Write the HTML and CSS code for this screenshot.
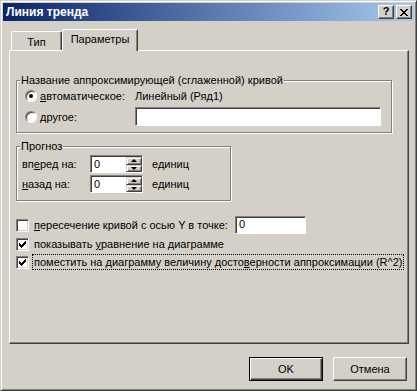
FILE: index.html
```html
<!DOCTYPE html>
<html lang="ru">
<head>
  <meta charset="UTF-8">
  <title>Линия тренда</title>
  <link rel="stylesheet" href="styles.css">
</head>
<body>
  <div class="window">
    <!-- Title bar -->
    <div class="titlebar">
      <span class="title">Линия тренда</span>
      <div class="caption-buttons">
        <div class="cap help">?</div>
        <div class="cap close">
          <svg width="8" height="7" viewBox="0 0 8 7" shape-rendering="crispEdges">
            <path d="M0 0h2v1h-2zM6 0h2v1h-2zM1 1h2v1h-2zM5 1h2v1h-2zM2 2h4v1h-4zM3 3h2v1h-2zM2 4h4v1h-4zM1 5h2v1h-2zM5 5h2v1h-2zM0 6h2v1h-2zM6 6h2v1h-2z" fill="#000"/>
          </svg>
        </div>
      </div>
    </div>

    <div class="client">
      <!-- Tabs -->
      <div class="tabs">
        <div class="tab">Тип</div>
        <div class="tab active">Параметры</div>
      </div>

      <div class="panel">
        <fieldset class="group group-name">
          <legend>Название аппроксимирующей (сглаженной) кривой</legend>
          <div class="opt-row first">
            <span class="radio checked"></span>
            <span class="opt-label"><u>а</u>втоматическое:</span>
            <span class="opt-value">Линейный (Ряд1)</span>
          </div>
          <div class="opt-row">
            <span class="radio"></span>
            <span class="opt-label"><u>д</u>ругое:</span>
            <div class="edit name-edit"></div>
          </div>
        </fieldset>

        <fieldset class="group group-forecast">
          <legend>Прогноз</legend>
          <div class="spin-row">
            <span class="spin-label">вп<u>е</u>ред на:</span>
            <div class="spin">
              <span class="spin-val">0</span>
              <div class="spin-btns">
                <div class="spin-btn"><span class="arr up"></span></div>
                <div class="spin-btn"><span class="arr down"></span></div>
              </div>
            </div>
            <span class="units">единиц</span>
          </div>
          <div class="spin-row">
            <span class="spin-label"><u>н</u>азад на:</span>
            <div class="spin">
              <span class="spin-val">0</span>
              <div class="spin-btns">
                <div class="spin-btn"><span class="arr up"></span></div>
                <div class="spin-btn"><span class="arr down"></span></div>
              </div>
            </div>
            <span class="units">единиц</span>
          </div>
        </fieldset>

        <div class="check-row first">
          <span class="check"></span>
          <span class="check-label"><u>п</u>ересечение кривой с осью Y в точке:</span>
          <div class="edit small-edit">0</div>
        </div>
        <div class="check-row">
          <span class="check checked">
            <svg width="7" height="7" viewBox="0 0 7 7" shape-rendering="crispEdges"><path d="M6 0h1v3h-1v1h-1v1h-1v1h-1v1h-1v-1h-1v-1h-1v-3h1v1h1v1h1v-1h1v-1h1z" fill="#000"/></svg>
          </span>
          <span class="check-label">показывать <u>у</u>равнение на диаграмме</span>
        </div>
        <div class="check-row">
          <span class="check checked">
            <svg width="7" height="7" viewBox="0 0 7 7" shape-rendering="crispEdges"><path d="M6 0h1v3h-1v1h-1v1h-1v1h-1v1h-1v-1h-1v-1h-1v-3h1v1h1v1h1v-1h1v-1h1z" fill="#000"/></svg>
          </span>
          <span class="check-label focused">поместить на диаграмму величину досто<u>в</u>ерности аппроксимации (R^2)</span>
        </div>
      </div>

      <!-- Dialog buttons -->
      <div class="buttons">
        <div class="btn default">OK</div>
        <div class="btn">Отмена</div>
      </div>
    </div>
  </div>
</body>
</html>
```

FILE: styles.css
```css
/* Classic dialog */
body {
  margin: 0;
  background: #d4d0c8;
  font-family: "Liberation Sans", Arial, sans-serif;
  font-size: 11px;
  color: #000;
}
u {
  text-decoration: underline;
  text-underline-offset: 1px;
}
.window {
  width: 417px;
  height: 391px;
  box-sizing: border-box;
  background: #d4d0c8;
  border: 1px solid;
  border-color: #d4d0c8 #404040 #404040 #d4d0c8;
  box-shadow: inset 1px 1px 0 #fff, inset -1px -1px 0 #808080;
  padding: 2px;
  display: flex;
  flex-direction: column;
}
/* Title bar */
.titlebar {
  height: 18px;
  background: linear-gradient(to right, #0a246a, #a6caf0);
  display: flex;
  align-items: center;
  justify-content: space-between;
  padding-left: 3px;
}
.title {
  color: #fff;
  font-weight: bold;
  font-size: 12px;
}
.caption-buttons {
  display: flex;
  gap: 2px;
  margin-right: 2px;
}
.cap {
  width: 16px;
  height: 14px;
  box-sizing: border-box;
  background: #d4d0c8;
  border: 1px solid;
  border-color: #fff #404040 #404040 #fff;
  box-shadow: inset -1px -1px 0 #808080;
  display: flex;
  align-items: center;
  justify-content: center;
  font-weight: bold;
  font-size: 11px;
  line-height: 1;
}
.cap.help {
  padding-bottom: 1px;
}
/* Tabs */
.client {
  flex: 1;
  display: flex;
  flex-direction: column;
}
.tabs {
  display: flex;
  align-items: flex-end;
  margin: 8px 0 0 8px;
  height: 21px;
}
.tab {
  box-sizing: border-box;
  height: 19px;
  width: 51px;
  border: 1px solid #fff;
  border-bottom: none;
  border-right: 1px solid #404040;
  box-shadow: inset -1px 0 0 #808080;
  border-radius: 2px 2px 0 0;
  text-align: center;
  line-height: 19px;
  padding-top: 1px;
}
.tab.active {
  width: 76px;
  height: 22px;
  margin-bottom: -1px;
  background: #d4d0c8;
  position: relative;
  z-index: 1;
  line-height: 18px;
  padding-top: 0;
}
.panel {
  width: 400px;
  height: 294px;
  box-sizing: border-box;
  margin-left: 6px;
  border: 1px solid;
  border-color: #fff #404040 #404040 #fff;
  box-shadow: inset -1px -1px 0 #808080;
  padding: 0 0 0 6px;
}
/* Group boxes */
.group {
  margin: 0;
  padding: 0 8px;
  border: 1px solid #808080;
  box-shadow: 1px 1px 0 #fff, inset 1px 1px 0 #fff;
}
.group legend {
  padding: 0 1px;
  margin-left: -5px;
  line-height: 13px;
  background: #d4d0c8;
}
.group-name {
  width: 376px;
  box-sizing: border-box;
  margin-top: 23px;
  padding-bottom: 6px;
}
.opt-row {
  display: flex;
  align-items: center;
  height: 19px;
  margin-top: 3px;
}
.opt-row.first {
  height: 17px;
  margin-top: 0;
}
.radio {
  width: 12px;
  height: 12px;
  box-sizing: border-box;
  border-radius: 50%;
  background: #fff;
  border: 1px solid;
  border-color: #808080 #fff #fff #808080;
  box-shadow: inset 1px 1px 0 #404040;
  position: relative;
}
.radio.checked::after {
  content: "";
  position: absolute;
  left: 3px;
  top: 3px;
  width: 4px;
  height: 4px;
  border-radius: 50%;
  background: #000;
}
.opt-label {
  margin-left: 3px;
  width: 92px;
}
.opt-value {
  margin-left: 3px;
}
.edit {
  box-sizing: border-box;
  background: #fff;
  border: 1px solid;
  border-color: #808080 #fff #fff #808080;
  box-shadow: inset 1px 1px 0 #404040;
}
.name-edit {
  width: 246px;
  height: 19px;
  margin-left: 3px;
}
.group-forecast {
  width: 215px;
  box-sizing: border-box;
  margin-top: 7px;
  padding: 0 5px 7px;
}
.group-forecast legend {
  margin-left: -2px;
}
.spin-row {
  display: flex;
  align-items: center;
  height: 18px;
  margin-top: 2px;
}
.spin-label {
  width: 68px;
}
.spin {
  width: 53px;
  height: 18px;
  box-sizing: border-box;
  background: #fff;
  border: 1px solid;
  border-color: #808080 #fff #fff #808080;
  box-shadow: inset 1px 1px 0 #404040;
  display: flex;
  justify-content: space-between;
  padding: 1px 0 0 1px;
}
.spin-val {
  padding-left: 2px;
  line-height: 15px;
}
.spin-btns {
  width: 16px;
  display: flex;
  flex-direction: column;
}
.spin-btn {
  flex: 1;
  box-sizing: border-box;
  background: #d4d0c8;
  border: 1px solid;
  border-color: #d4d0c8 #404040 #404040 #d4d0c8;
  box-shadow: inset 1px 1px 0 #fff, inset -1px -1px 0 #808080;
  display: flex;
  align-items: center;
  justify-content: center;
}
.arr {
  width: 0;
  height: 0;
  border-left: 3px solid transparent;
  border-right: 3px solid transparent;
}
.arr.up {
  border-bottom: 3px solid #000;
}
.arr.down {
  border-top: 3px solid #000;
}
.units {
  margin-left: 9px;
}
/* Check boxes */
.check-row {
  display: flex;
  align-items: center;
  height: 18px;
}
.check-row.first {
  margin-top: 15px;
  margin-bottom: 1px;
}
.check {
  width: 13px;
  height: 13px;
  box-sizing: border-box;
  background: #fff;
  border: 1px solid;
  border-color: #808080 #fff #fff #808080;
  box-shadow: inset 1px 1px 0 #404040, inset -1px -1px 0 #d4d0c8;
  display: flex;
  align-items: center;
  justify-content: center;
}
.check-label {
  margin-left: 3px;
  padding: 1px 1px;
  border: 1px dotted transparent;
}
.check-label.focused {
  border-color: #000;
}
.small-edit {
  width: 71px;
  height: 18px;
  margin-left: 5px;
  padding-left: 3px;
  line-height: 15px;
}
/* Buttons */
.buttons {
  display: flex;
  justify-content: flex-end;
  gap: 10px;
  margin: 13px 7px 0 0;
}
.btn {
  width: 74px;
  height: 24px;
  box-sizing: border-box;
  border: 1px solid;
  border-color: #fff #404040 #404040 #fff;
  box-shadow: inset -1px -1px 0 #808080;
  display: flex;
  align-items: center;
  justify-content: center;
}
.btn.default {
  border: 1px solid #000;
  box-shadow: inset 1px 1px 0 #fff, inset -1px -1px 0 #404040, inset -2px -2px 0 #808080;
}
```
